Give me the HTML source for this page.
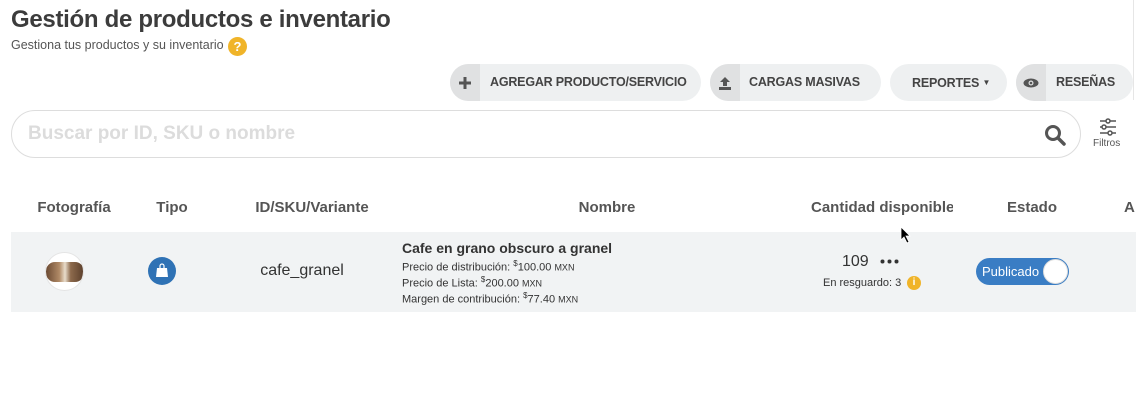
<!DOCTYPE html>
<html><head><meta charset="utf-8"><style>
*{margin:0;padding:0;box-sizing:border-box}
body{width:1136px;height:408px;background:#fff;font-family:"Liberation Sans",sans-serif;position:relative;overflow:hidden;color:#333}
.a{position:absolute;white-space:nowrap}
.btn{position:absolute;top:64px;height:37px;border-radius:19px;background:#eef0f1;overflow:hidden;font-size:12.5px;font-weight:bold;color:#444;line-height:37px;letter-spacing:-0.2px}
.btn .ic{position:absolute;left:0;top:0;width:30px;height:37px;background:#e0e1e2;display:flex;align-items:center;justify-content:center}
.h{position:absolute;top:199px;font-size:15px;font-weight:bold;color:#555;transform:translateX(-50%);white-space:nowrap}
.s{font-size:11px;color:#333}
sup{font-size:8px}
.m{font-size:9px}
</style></head><body>
<div style="position:absolute;right:2px;top:0;width:1px;height:100px;background:#e6e6e6"></div>
<div class="a" style="left:11px;top:6px;font-size:24px;font-weight:bold;color:#3c3c3c;letter-spacing:-0.3px">Gestión de productos e inventario</div>
<div class="a" style="left:11px;top:38px;font-size:12.5px;color:#555">Gestiona tus productos y su inventario</div>
<div class="a" style="left:228px;top:37px;width:19px;height:19px;border-radius:50%;background:#f0b429;color:#fff;font-weight:bold;font-size:13px;text-align:center;line-height:19px">?</div>

<div class="btn" style="left:450px;width:251px"><div class="ic"><svg width="12" height="12"><path d="M6 0v12M0 6h12" stroke="#555" stroke-width="3"/></svg></div><span style="position:absolute;left:40px">AGREGAR PRODUCTO/SERVICIO</span></div>
<div class="btn" style="left:710px;width:171px"><div class="ic"><svg width="12" height="14"><path d="M6 1l-5 5h3v4h4V6h3z" fill="#555"/><rect x="0" y="11" width="12" height="3" fill="#555"/></svg></div><span style="position:absolute;left:39px">CARGAS MASIVAS</span></div>
<div class="btn" style="left:890px;width:117px"><span style="position:absolute;left:22px">REPORTES <span style="font-size:8px;vertical-align:2px">▼</span></span></div>
<div class="btn" style="left:1016px;width:117px"><div class="ic"><svg width="16" height="10"><ellipse cx="8" cy="5" rx="7.5" ry="4.5" fill="#555"/><circle cx="8" cy="5" r="2.5" fill="#e0e1e2"/><circle cx="8" cy="5" r="1.3" fill="#555"/></svg></div><span style="position:absolute;left:40px">RESEÑAS</span></div>

<div style="position:absolute;left:11px;top:110px;width:1070px;height:48px;border:1px solid #ddd;border-radius:24px"></div>
<div class="a" style="left:28px;top:123px;font-size:19px;font-weight:bold;color:#dcdcdc">Buscar por ID, SKU o nombre</div>
<svg class="a" style="left:1044px;top:124px" width="22" height="22"><circle cx="9" cy="9" r="6.5" stroke="#555" stroke-width="3" fill="none"/><path d="M14 14l6 6" stroke="#555" stroke-width="3.5" stroke-linecap="round"/></svg>
<svg class="a" style="left:1099px;top:118px" width="18" height="18" fill="none" stroke="#555" stroke-width="1.5"><path d="M1 3h6M11 3h6M1 9h2M7 9h10M1 15h8M13 15h4"/><circle cx="9" cy="3" r="2"/><circle cx="5" cy="9" r="2"/><circle cx="11" cy="15" r="2"/></svg>
<div class="a" style="left:1093px;top:138px;font-size:10px;color:#555">Filtros</div>

<div class="h" style="left:74px">Fotografía</div>
<div class="h" style="left:172px">Tipo</div>
<div class="h" style="left:312px">ID/SKU/Variante</div>
<div class="h" style="left:607px">Nombre</div>
<div class="h" style="width:142px;overflow:hidden;transform:none;left:811px">Cantidad disponible</div>
<div class="h" style="left:1032px">Estado</div>
<div class="h" style="left:1124px;transform:none">A</div>

<div style="position:absolute;left:11px;top:232px;width:1125px;height:80px;background:#f1f3f4"></div>
<div style="position:absolute;left:45px;top:252px;width:39px;height:39px;border-radius:50%;background:#fff;border:1px solid #e4e4e4;overflow:hidden"><div style="position:absolute;left:0;top:9px;width:38px;height:20px;border-radius:9px;background:linear-gradient(90deg,#6b4a33,#b08a66 35%,#e8dccb 50%,#8d6a4c 65%,#5a3e2b)"></div></div>
<div style="position:absolute;left:148px;top:257px;width:28px;height:28px;border-radius:50%;background:#2f72b5"></div>
<svg class="a" style="left:156px;top:263px" width="12" height="15"><path d="M4 5V3a2 2 0 014 0v2" stroke="#fff" stroke-width="1.2" fill="none"/><path d="M1 5h10l1 9H0z" fill="#fff"/></svg>
<div class="a" style="left:302px;top:262px;transform:translateX(-50%);font-size:16px;color:#333">cafe_granel</div>
<div class="a" style="left:402px;top:240px;font-size:14px;font-weight:bold;color:#333">Cafe en grano obscuro a granel</div>
<div class="a s" style="left:402px;top:259px">Precio de distribución: <sup>$</sup>100.00 <span class="m">MXN</span></div>
<div class="a s" style="left:402px;top:275px">Precio de Lista: <sup>$</sup>200.00 <span class="m">MXN</span></div>
<div class="a s" style="left:402px;top:291px">Margen de contribución: <sup>$</sup>77.40 <span class="m">MXN</span></div>
<div class="a" style="left:842px;top:253px;font-size:16px;color:#333">109</div>
<svg class="a" style="left:880px;top:259px" width="20" height="5"><circle cx="2.5" cy="2.5" r="2" fill="#333"/><circle cx="9.5" cy="2.5" r="2" fill="#333"/><circle cx="16.5" cy="2.5" r="2" fill="#333"/></svg>
<div class="a s" style="left:823px;top:277px">En resguardo: 3</div>
<div class="a" style="left:907px;top:276px;width:14px;height:14px;border-radius:50%;background:#f0b429;color:#fff;font-size:10px;font-weight:bold;text-align:center;line-height:14px">i</div>
<div style="position:absolute;left:976px;top:258px;width:93px;height:27px;border-radius:14px;background:#3a7dc4"></div>
<div class="a" style="left:982px;top:264px;font-size:13px;color:#fff">Publicado</div>
<div style="position:absolute;left:1043px;top:259px;width:25px;height:25px;border-radius:50%;background:#fff;border:1px solid #ddd"></div>
<svg class="a" style="left:900px;top:226px" width="12" height="18"><path d="M1 1v13l3-3 3 6 2-1-3-6h4z" fill="#000" stroke="#fff" stroke-width="0.8"/></svg>
</body></html>
